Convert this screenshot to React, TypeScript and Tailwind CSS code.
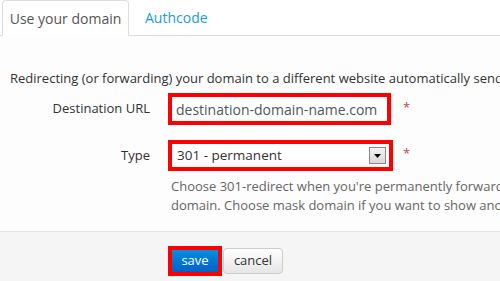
export default function App() {
	return (
		<div className="w-[500px] h-[281px] overflow-hidden bg-white text-[13px] text-[#333] font-['Open_Sans',sans-serif] flex flex-col">
			<div className="h-[36px] shrink-0 flex items-end border-b border-[#ddd] pl-[2px]">
				<div className="h-[36px] w-[127px] -mb-px bg-white border border-[#ddd] border-b-white rounded-t-[4px] flex items-center justify-center text-[#555] text-[14px]">
					Use your domain
				</div>
				<div className="h-[36px] px-[16px] flex items-center text-[#1a9bdc] text-[14px]">
					Authcode
				</div>
			</div>

			<div className="flex-1 bg-[#fdfdfd] flex flex-col">
				<p className="mt-[33px] pl-[10px] whitespace-nowrap leading-[18px]">
					Redirecting (or forwarding) your domain to a different website automatically sends visitors to another address.
				</p>

				<div className="mt-[6px] flex items-center h-[32px]">
					<label className="w-[150px] text-right">Destination URL</label>
					<div className="ml-[18px] w-[223px] h-[32px] border-4 border-[#f00] bg-white flex items-center pl-[4px] text-[#555] text-[14px]">
						destination-domain-name.com
					</div>
					<span className="ml-[12px] text-[#b94a48] -mt-[2px]">*</span>
				</div>

				<div className="mt-[15px] flex items-center h-[31px]">
					<label className="w-[150px] text-right">Type</label>
					<div className="ml-[18px] w-[225px] h-[31px] border-4 border-[#f00] bg-white flex items-center pl-[5px] pr-[3px] text-[#333] text-[13.5px]">
						<span className="flex-1">301 - permanent</span>
						<div className="w-[17px] h-[17px] border border-[#888] bg-gradient-to-b from-[#f4f4f4] to-[#d8d8d8] flex items-center justify-center">
							<svg width="7" height="4" viewBox="0 0 7 4">
								<path d="M0 0h7L3.5 4z" fill="#000" />
							</svg>
						</div>
					</div>
					<span className="ml-[10px] text-[#b94a48] -mt-[4px]">*</span>
				</div>

				<div className="mt-[6px] pl-[171px] text-[#666] leading-[19px] whitespace-nowrap">
					<p>Choose 301-redirect when you're permanently forwarding your</p>
					<p>domain. Choose mask domain if you want to show another site.</p>
				</div>

				<div className="mt-[16px] flex-1 bg-[#f5f5f5] border-t border-[#e5e5e5] pt-[14px] pl-[168px] flex items-start gap-[1px]">
					<button className="w-[54px] h-[30px] border-4 border-[#f00] bg-gradient-to-b from-[#0a8ee0] to-[#0062c9] text-white text-[13px]">
						save
					</button>
					<button className="mt-[2px] w-[60px] h-[26px] border border-[#ccc] rounded-[4px] bg-gradient-to-b from-white to-[#e6e6e6] text-[#333] text-[13px]">
						cancel
					</button>
				</div>
			</div>
		</div>
	);
}
